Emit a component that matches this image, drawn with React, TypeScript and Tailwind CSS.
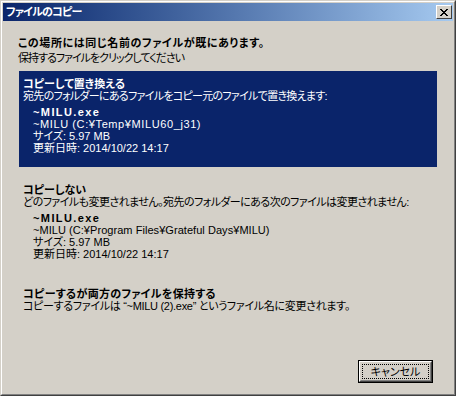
import React from "react";

// Windows 2000 風「ファイルのコピー」ダイアログ
type FileInfo = {
  name: string;
  path: string;
  pathClass?: string;
  size: string;
  date: string;
};

type OptionProps = {
  title: string;
  titleClass?: string;
  desc: string;
  descClass?: string;
  file?: FileInfo;
  selected?: boolean;
  className?: string;
};

function Option({
  title,
  titleClass = "",
  desc,
  descClass = "",
  file,
  selected,
  className = "",
}: OptionProps) {
  return (
    <div
      className={`w-[418px] pt-[7px] pb-[13px] pl-[4px] whitespace-nowrap ${
        selected ? "bg-[#0a246a] text-white" : "text-black"
      } ${className}`}
    >
      <div className={`font-bold ${titleClass}`}>{title}</div>
      <div className={descClass}>{desc}</div>
      {file && (
        <div className="pl-[10px] mt-[4px]">
          <div className="font-bold tracking-[1.4px]">{file.name}</div>
          <div className={file.pathClass}>{file.path}</div>
          <div>{file.size}</div>
          <div>{file.date}</div>
        </div>
      )}
    </div>
  );
}

function CloseButton() {
  return (
    <div className="w-[16px] h-[14px] bg-[#d4d0c8] border-t border-l border-white border-r border-b border-r-[#404040] border-b-[#404040] flex items-center justify-center">
      <svg width="8" height="7" viewBox="0 0 8 7" shapeRendering="crispEdges">
        <path
          d="M0 0h2v1h1v1h2V1h1V0h2v1H7v1H6v1H5v1h1v1h1v1h1v1H6V6H5V5H3v1H2v1H0V6h1V5h1V4h1V3H2V2H1V1H0z"
          fill="#000"
        />
      </svg>
    </div>
  );
}

export default function App() {
  return (
    <div className="w-[456px] h-[396px] font-['Liberation_Sans','Noto_Sans_CJK_JP',sans-serif] text-[11px] leading-[12px] [font-feature-settings:'palt']">
      <div className="h-full border border-t-[#d4d0c8] border-l-[#d4d0c8] border-r-[#404040] border-b-[#404040]">
        <div className="h-full border border-t-white border-l-white border-r-[#808080] border-b-[#808080] bg-[#d4d0c8] p-[1px] flex flex-col">
          {/* タイトルバー */}
          <div className="h-[18px] flex items-center justify-between pl-[3px] pr-[1px] bg-gradient-to-r from-[#0a246a] to-[#a6caf0]">
            <span className="text-white font-bold tracking-[-0.8px]">ファイルのコピー</span>
            <CloseButton />
          </div>

          {/* 本文 */}
          <div className="flex-1 flex flex-col pl-[15px] pt-[16px]">
            <div className="font-bold text-black tracking-[0.6px] whitespace-nowrap">
              この場所には同じ名前のファイルが既にあります。
            </div>
            <div className="mt-[3px] text-black tracking-[-1px]">
              保持するファイルをクリックしてください
            </div>

            <Option
              className="mt-[7px] ml-[1px]"
              selected
              title="コピーして置き換える"
              desc="宛先のフォルダーにあるファイルをコピー元のファイルで置き換えます:"
              descClass="tracking-[-0.7px]"
              file={{
                name: "~MILU.exe",
                path: "~MILU (C:¥Temp¥MILU60_j31)",
                pathClass: "tracking-[0.6px]",
                size: "サイズ: 5.97 MB",
                date: "更新日時: 2014/10/22 14:17",
              }}
            />
            <Option
              className="mt-[10px] ml-[1px]"
              title="コピーしない"
              desc="どのファイルも変更されません。宛先のフォルダーにある次のファイルは変更されません:"
              descClass="tracking-[-0.55px]"
              file={{
                name: "~MILU.exe",
                path: "~MILU (C:¥Program Files¥Grateful Days¥MILU)",
                pathClass: "tracking-[0.05px]",
                size: "サイズ: 5.97 MB",
                date: "更新日時: 2014/10/22 14:17",
              }}
            />
            <Option
              className="mt-[8px] ml-[1px]"
              title="コピーするが両方のファイルを保持する"
              titleClass="tracking-[0.3px]"
              desc="コピーするファイルは “~MILU (2).exe” というファイル名に変更されます。"
              descClass="tracking-[-0.3px]"
            />

            {/* キャンセル */}
            <div className="mt-auto mb-[10px] mr-[20px] self-end">
              <div className="w-[75px] h-[23px] border border-black">
                <div className="h-full border border-t-white border-l-white border-r-[#404040] border-b-[#404040]">
                  <div className="h-full border border-t-[#d4d0c8] border-l-[#d4d0c8] border-r-[#808080] border-b-[#808080] p-[1px]">
                    <div className="h-full border border-dotted border-black flex items-center justify-center text-black">
                      キャンセル
                    </div>
                  </div>
                </div>
              </div>
            </div>
          </div>
        </div>
      </div>
    </div>
  );
}
